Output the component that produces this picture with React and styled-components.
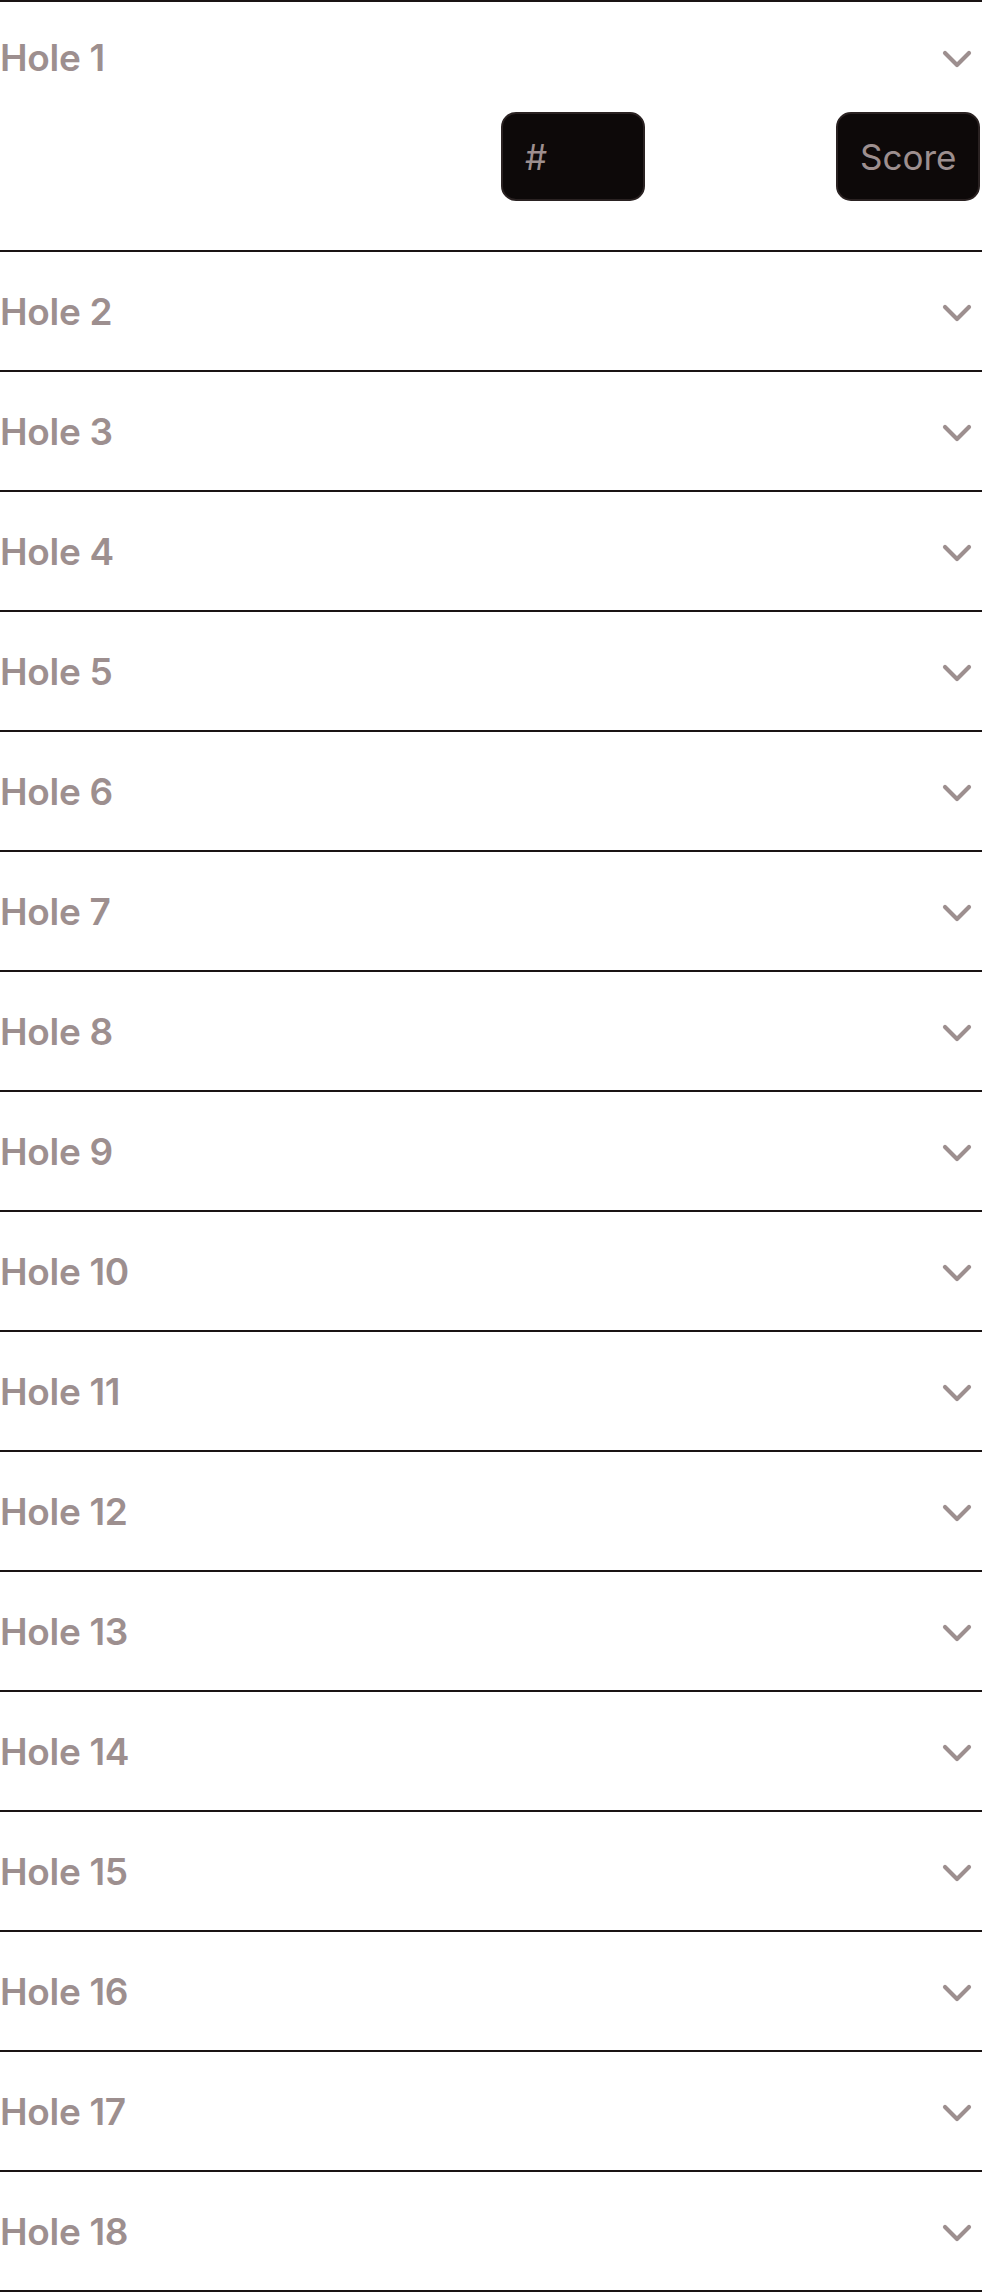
import React, { useState } from 'react';
import styled, { createGlobalStyle } from 'styled-components';

const GlobalStyle = createGlobalStyle`
  html, body {
    margin: 0;
    padding: 0;
    background: #ffffff;
    font-family: Inter, "Noto Sans", sans-serif;
  }
`;

const holes = Array.from({ length: 18 }, (_, i) => i + 1);

const Chevron = () => (
  <ChevronSvg width="48" height="48" viewBox="0 0 24 24">
    <path d="m6 9 6 6 6-6" />
  </ChevronSvg>
);

const HoleItem = ({ num, open, onToggle }) => (
  <Item>
    <Header $open={open} onClick={onToggle}>
      <HoleTitle>Hole {num}</HoleTitle>
      <Chevron />
    </Header>
    {open && (
      <Panel>
        <ScoreInput placeholder="#" />
        <ScoreInput placeholder="Score" />
      </Panel>
    )}
  </Item>
);

const App = () => {
  const [openHole, setOpenHole] = useState(1);
  return (
    <>
      <GlobalStyle />
      <List>
        {holes.map(n => (
          <HoleItem
            key={n}
            num={n}
            open={openHole === n}
            onToggle={() => setOpenHole(openHole === n ? null : n)}
          />
        ))}
      </List>
    </>
  );
};

const List = styled.div`
  display: flex;
  flex-direction: column;
  border-top: 2px solid #1a1414;
`;

const Item = styled.div`
  display: flex;
  flex-direction: column;
  border-bottom: 2px solid #1a1414;
`;

const Header = styled.button`
  display: flex;
  align-items: center;
  justify-content: space-between;
  height: ${props => (props.$open ? '110px' : '118px')};
  padding: 0 1px 0 0;
  margin: 0;
  border: none;
  background: transparent;
  cursor: pointer;
  font: inherit;
  text-align: left;
`;

const HoleTitle = styled.span`
  font-family: Inter, "Noto Sans", sans-serif;
  font-size: 37px;
  font-weight: 600;
  color: #9d8f8f;
  letter-spacing: -0.3px;
`;

const ChevronSvg = styled.svg`
  fill: none;
  stroke: #9d8f8f;
  stroke-width: 2.1;
  stroke-linecap: round;
  stroke-linejoin: round;
  flex-shrink: 0;
  margin-top: 4px;
`;

const Panel = styled.div`
  display: flex;
  justify-content: flex-end;
  gap: 191px;
  padding: 0 2px 49px 0;
`;

const ScoreInput = styled.input`
  box-sizing: border-box;
  width: 144px;
  height: 89px;
  padding: 0 0 0 22px;
  border: 2px solid #2a2222;
  border-radius: 15px;
  background: #0d0909;
  color: #d8cfcf;
  font-family: Inter, "Noto Sans", sans-serif;
  font-size: 35px;
  font-weight: 400;
  outline: none;

  &::placeholder {
    color: #9d8f8f;
    opacity: 1;
  }
`;

export default App;
